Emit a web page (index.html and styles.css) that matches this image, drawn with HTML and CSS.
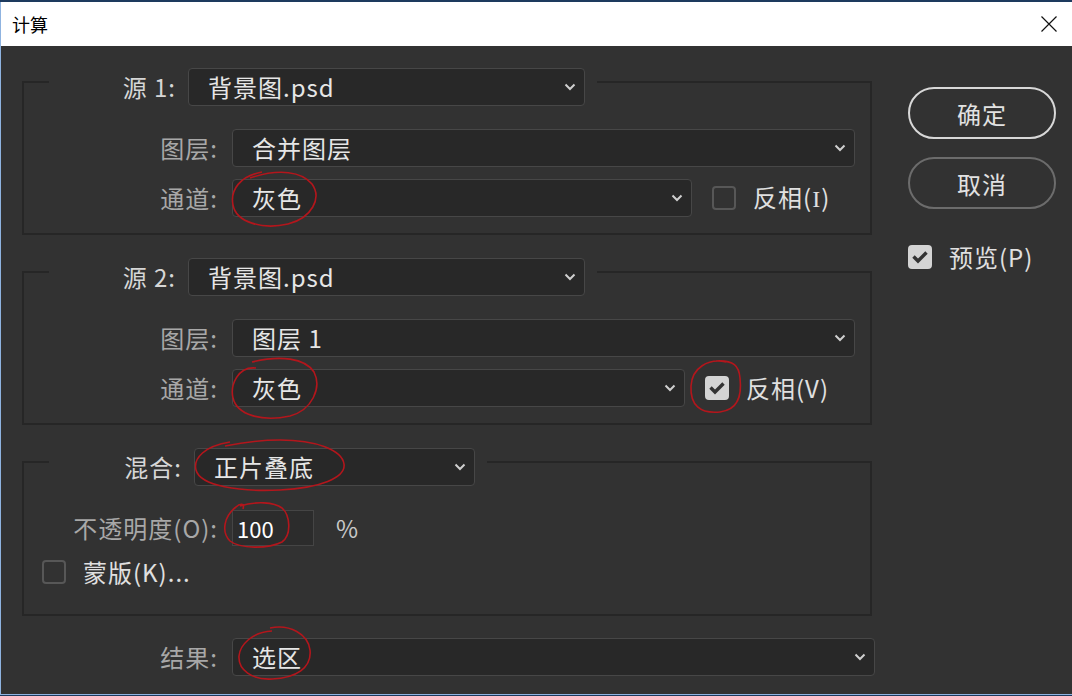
FILE: index.html
```html
<!DOCTYPE html>
<html lang="zh-CN">
<head>
    <meta charset="UTF-8">
    <meta name="viewport" content="width=device-width, initial-scale=1.0">
    <title>计算</title>
    <link rel="stylesheet" href="styles.css">
</head>
<body>
    <div class="window">
        <div class="titlebar">
            <span class="title">计算</span>
            <svg class="close" width="16" height="16" viewBox="0 0 16 16">
                <path d="M0.5 0.5 L15.5 15.5 M15.5 0.5 L0.5 15.5" stroke="#111" stroke-width="1.2" fill="none"/>
            </svg>
        </div>

        <div class="dialog">
            <div class="main">
                <!-- source 1 -->
                <fieldset class="group">
                    <legend class="group-head">
                        <span class="head-label">源 1:</span>
                        <div class="select w-source">
                            <span>背景图.psd</span>
                            <svg class="chev" width="12" height="8" viewBox="0 0 12 8"><path d="M1.5 1.5 L6 6 L10.5 1.5"/></svg>
                        </div>
                    </legend>
                    <div class="row">
                        <span class="row-label">图层:</span>
                        <div class="select grow">
                            <span>合并图层</span>
                            <svg class="chev" width="12" height="8" viewBox="0 0 12 8"><path d="M1.5 1.5 L6 6 L10.5 1.5"/></svg>
                        </div>
                    </div>
                    <div class="row">
                        <span class="row-label">通道:</span>
                        <div class="select w-channel">
                            <span>灰色</span>
                            <svg class="chev" width="12" height="8" viewBox="0 0 12 8"><path d="M1.5 1.5 L6 6 L10.5 1.5"/></svg>
                        </div>
                        <span class="check"></span>
                        <span class="check-label">反相(<span class="serif">I</span>)</span>
                    </div>
                </fieldset>

                <!-- source 2 -->
                <fieldset class="group">
                    <legend class="group-head">
                        <span class="head-label">源 2:</span>
                        <div class="select w-source">
                            <span>背景图.psd</span>
                            <svg class="chev" width="12" height="8" viewBox="0 0 12 8"><path d="M1.5 1.5 L6 6 L10.5 1.5"/></svg>
                        </div>
                    </legend>
                    <div class="row">
                        <span class="row-label">图层:</span>
                        <div class="select grow">
                            <span>图层 1</span>
                            <svg class="chev" width="12" height="8" viewBox="0 0 12 8"><path d="M1.5 1.5 L6 6 L10.5 1.5"/></svg>
                        </div>
                    </div>
                    <div class="row">
                        <span class="row-label">通道:</span>
                        <div class="select w-channel-b">
                            <span>灰色</span>
                            <svg class="chev" width="12" height="8" viewBox="0 0 12 8"><path d="M1.5 1.5 L6 6 L10.5 1.5"/></svg>
                        </div>
                        <span class="check on">
                            <svg width="24" height="24" viewBox="0 0 24 24"><path d="M5.5 11.5 L10 16 L18.5 7.5"/></svg>
                        </span>
                        <span class="check-label">反相(V)</span>
                    </div>
                </fieldset>

                <!-- blending -->
                <fieldset class="group group-blend">
                    <legend class="group-head">
                        <span class="head-label wide">混合:</span>
                        <div class="select w-blend">
                            <span>正片叠底</span>
                            <svg class="chev" width="12" height="8" viewBox="0 0 12 8"><path d="M1.5 1.5 L6 6 L10.5 1.5"/></svg>
                        </div>
                    </legend>
                    <div class="row">
                        <span class="row-label">不透明度(O):</span>
                        <div class="num-input">100</div>
                        <span class="unit">%</span>
                    </div>
                    <div class="row row-mask">
                        <span class="check"></span>
                        <span class="check-label">蒙版(K)...</span>
                    </div>
                </fieldset>

                <div class="row result">
                    <span class="row-label">结果:</span>
                    <div class="select w-result">
                        <span>选区</span>
                        <svg class="chev" width="12" height="8" viewBox="0 0 12 8"><path d="M1.5 1.5 L6 6 L10.5 1.5"/></svg>
                    </div>
                </div>
            </div>

            <div class="side">
                <button class="btn btn-ok">确定</button>
                <button class="btn">取消</button>
                <div class="preview">
                    <span class="check on">
                        <svg width="24" height="24" viewBox="0 0 24 24"><path d="M5.5 11.5 L10 16 L18.5 7.5"/></svg>
                    </span>
                    <span class="check-label">预览(P)</span>
                </div>
            </div>

            <!-- hand drawn red marks over the dialog -->
            <svg class="marks" width="1071" height="648" viewBox="1 46 1071 648">
                <path d="M262 172 C240 176 230 190 233 205 C236 222 262 230 288 224 C312 218 322 198 312 184 C302 172 280 168 250 178"/>
                <path d="M256 368 C238 366 230 385 233 398 C237 415 262 422 290 416 C312 410 322 388 314 372 C305 358 280 355 252 362"/>
                <path d="M726 362 C708 358 692 368 691 386 C690 405 700 414 720 412 C738 410 742 396 740 378 C739 366 734 360 716 361"/>
                <path d="M230 442 C205 446 193 458 196 470 C200 486 240 492 280 490 C320 488 346 478 344 464 C342 450 316 440 280 440 C260 440 240 443 225 446"/>
                <path d="M243 509 C245 503 240 503 236 507 C224 516 221 532 230 541 C240 549 268 549 282 542 C292 535 290 515 282 508 C274 502 256 501 240 506"/>
                <path d="M272 631 C252 632 240 645 239 656 C238 670 252 680 272 679 C296 678 312 668 310 650 C308 634 290 624 270 628"/>
            </svg>
        </div>
    </div>
</body>
</html>
```

FILE: styles.css
```css
body {
    margin: 0;
    background-color: #1d3a5e;
    font-family: "Noto Sans CJK SC", "Noto Sans", sans-serif;
}
.window {
    margin-top: 2px;
    height: 693px;
    box-sizing: border-box;
    border-left: 1px solid #8fb3e0;
    border-bottom: 1px solid #8fb3e0;
    display: flex;
    flex-direction: column;
}
.titlebar {
    height: 44px;
    background: #fff;
    display: flex;
    align-items: center;
    justify-content: space-between;
    padding: 0 15px 0 11px;
}
.title {
    font-size: 18px;
    line-height: 1;
    color: #000;
}
.dialog {
    position: relative;
    flex: 1;
    background-color: #323232;
    display: flex;
    gap: 36px;
    padding: 12px 16px 0 21px;
    color: #e2e2e2;
    font-size: 24px;
    line-height: 1;
    letter-spacing: 1px;
}
.main {
    width: 850px;
    flex-shrink: 0;
}
.group {
    margin: 0 0 13px;
    padding: 23px 15px 16px 18px;
    border: 2px solid #262626;
    min-width: 0;
}
.group-blend {
    margin-bottom: 0;
    padding-bottom: 30px;
}
.group-head {
    display: flex;
    align-items: center;
    margin-left: 7px;
    padding: 10px 12px 0 0;
}
.head-label {
    width: 127px;
    margin-right: 12px;
    text-align: right;
    color: #d6d6d6;
    white-space: nowrap;
}
.head-label.wide {
    width: 133px;
    margin-right: 12px;
}
.row {
    display: flex;
    align-items: center;
    height: 38px;
}
.row + .row {
    margin-top: 12px;
}
.row-label {
    width: 176px;
    margin-right: 14px;
    text-align: right;
    color: #a8a8a8;
    white-space: nowrap;
    flex-shrink: 0;
}
.select {
    height: 38px;
    box-sizing: border-box;
    background-color: #282828;
    border: 1px solid #474747;
    border-radius: 4px;
    padding: 0 8px 0 19px;
    display: flex;
    align-items: center;
    justify-content: space-between;
    color: #e6e6e6;
    white-space: nowrap;
    flex-shrink: 0;
}
.chev path {
    fill: none;
    stroke: #cfcfcf;
    stroke-width: 2;
}
.grow { flex: 1; }
.w-source { width: 397px; }
.w-channel { width: 460px; }
.w-channel-b { width: 453px; }
.w-blend { width: 281px; }
.w-result { width: 643px; }
.check {
    width: 24px;
    height: 24px;
    box-sizing: border-box;
    border: 2px solid #575757;
    border-radius: 4px;
    margin-left: 20px;
    flex-shrink: 0;
    position: relative;
}
.check.on {
    background-color: #d4d4d4;
    border-color: #d4d4d4;
}
.check svg {
    position: absolute;
    top: -2px;
    left: -2px;
}
.check svg path {
    fill: none;
    stroke: #333;
    stroke-width: 3.4;
}
.check-label {
    margin-left: 17px;
    color: #e0e0e0;
    white-space: nowrap;
}
.serif {
    font-family: "Liberation Serif", serif;
}
.num-input {
    width: 82px;
    height: 36px;
    box-sizing: border-box;
    border: 1px solid #454545;
    background-color: #2c2c2c;
    padding-left: 4px;
    display: flex;
    align-items: center;
    font-size: 22px;
    letter-spacing: 0;
    color: #fff;
}
.unit {
    margin-left: 22px;
    color: #c8c8c8;
}
.row.row-mask {
    height: 24px;
    margin-top: 13px;
}
.row-mask .check {
    margin-left: 0;
}
.row.result {
    margin-top: 22px;
    padding-left: 20px;
}
.side {
    width: 148px;
    padding-top: 29px;
    display: flex;
    flex-direction: column;
}
.btn {
    height: 52px;
    border: 2px solid #6c6c6c;
    border-radius: 26px;
    background: transparent;
    color: #e2e2e2;
    font-family: inherit;
    font-size: 24px;
    letter-spacing: 1px;
    margin-bottom: 18px;
}
.btn-ok {
    border-color: #d8d8d8;
}
.preview {
    display: flex;
    align-items: center;
    margin-top: 18px;
}
.preview .check {
    margin-left: 0;
}
.marks {
    position: absolute;
    top: 0;
    left: 0;
    pointer-events: none;
}
.marks path {
    fill: none;
    stroke: #b3161c;
    stroke-width: 1.6;
}
```
